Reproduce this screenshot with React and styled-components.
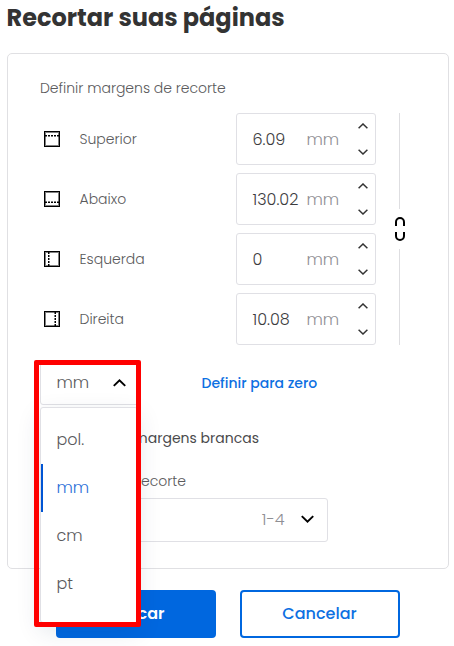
import { useState } from "react";
import styled, { createGlobalStyle } from "styled-components";

const margins = [
  { side: "top", label: "Superior", value: "6.09" },
  { side: "bottom", label: "Abaixo", value: "130.02" },
  { side: "left", label: "Esquerda", value: "0" },
  { side: "right", label: "Direita", value: "10.08" },
];

const units = ["pol.", "mm", "cm", "pt"];

const dashes = {
  top: "M1 4.75H15",
  bottom: "M1 11.25H15",
  left: "M4.75 1V15",
  right: "M11.25 1V15",
};

function SideIcon({ side }) {
  return (
    <svg width="16" height="16" viewBox="0 0 16 16" fill="none">
      <rect x="1.5" y="1.5" width="13" height="13" stroke="#808080" />
      <rect x="0.5" y="0.5" width="15" height="15" stroke="#000000" />
      <path d={dashes[side]} stroke="#000000" strokeWidth="1.5" strokeDasharray="2 1" />
    </svg>
  );
}

function Chevron({ up, width = 10, height = 6, color = "#333333", weight = 1.5 }) {
  return (
    <svg width={width} height={height} viewBox="0 0 10 6" fill="none">
      <path
        d={up ? "M0.6 5.2L5 1L9.4 5.2" : "M0.6 0.8L5 5L9.4 0.8"}
        stroke={color}
        strokeWidth={weight}
      />
    </svg>
  );
}

function LinkIcon() {
  return (
    <svg width="12" height="24" viewBox="0 0 12 24" fill="none" stroke="#000000" strokeWidth="2">
      <path d="M2 9V5A4 4 0 0 1 10 5V9" />
      <path d="M2 15V19A4 4 0 0 0 10 19V15" />
    </svg>
  );
}

export default function App() {
  const [unit, setUnit] = useState("mm");

  return (
    <Page>
      <GlobalStyle />
      <Title>Recortar suas páginas</Title>
      <Card>
        <Caption>Definir margens de recorte</Caption>
        <MarginArea>
          <Fields>
            {margins.map((item) => (
              <Field key={item.side}>
                <SideIcon side={item.side} />
                <FieldLabel>{item.label}</FieldLabel>
                <NumberBox>
                  <NumberValue>{item.value}</NumberValue>
                  <Suffix>{unit}</Suffix>
                  <Steppers>
                    <Chevron up />
                    <Chevron />
                  </Steppers>
                </NumberBox>
              </Field>
            ))}
          </Fields>
          <Linker>
            <Line />
            <LinkIcon />
            <Line />
          </Linker>
        </MarginArea>
        <UnitRow>
          <UnitSelect>
            <UnitName>{unit}</UnitName>
            <Chevron up width={13} height={8} color="#000000" weight={1.5} />
            <Menu>
              {units.map((name) => (
                <Option key={name} $active={name === unit} onClick={() => setUnit(name)}>
                  {name}
                </Option>
              ))}
            </Menu>
            <Highlight />
          </UnitSelect>
          <ResetButton>Definir para zero</ResetButton>
        </UnitRow>
        <CheckLabel>margens brancas</CheckLabel>
        <RangeLabel>recorte</RangeLabel>
        <RangeSelect>
          <Range>1-4</Range>
          <Chevron width={13} height={8} color="#000000" weight={1.5} />
        </RangeSelect>
      </Card>
      <Actions>
        <Button $primary>Aplicar</Button>
        <Button>Cancelar</Button>
      </Actions>
    </Page>
  );
}

const GlobalStyle = createGlobalStyle`
  body {
    margin: 0;
    background: #ffffff;
    font-family: Poppins, Inter, "Open Sans", sans-serif;
    font-weight: 300;
    color: #5a5a5c;
  }

  * {
    box-sizing: border-box;
  }

  button {
    font-family: inherit;
    padding: 0;
    cursor: pointer;
  }
`;

const Page = styled.div`
  width: 454px;
  height: 646px;
  overflow: hidden;
`;

const Title = styled.h1`
  height: 53px;
  margin: 0;
  padding-left: 6.5px;
  font-size: 24px;
  font-weight: 700;
  line-height: 36px;
  white-space: nowrap;
  color: #333333;
`;

const Card = styled.section`
  width: 442px;
  height: 516px;
  margin-left: 7px;
  padding: 24px 32px 0;
  border: 1px solid #e0e0e3;
  border-radius: 5px;
`;

const Caption = styled.p`
  height: 35px;
  margin: 0;
  font-size: 14px;
  line-height: 21px;
  letter-spacing: -0.02px;
`;

const MarginArea = styled.div`
  display: flex;
  height: 232px;
`;

const Fields = styled.div`
  display: flex;
  flex-direction: column;
  gap: 8px;
  width: 336px;
`;

const Field = styled.div`
  display: flex;
  align-items: center;
  height: 52px;
  padding-left: 4px;
`;

const FieldLabel = styled.span`
  flex: 1;
  padding-left: 19.5px;
  font-size: 14px;
`;

const NumberBox = styled.div`
  display: flex;
  align-items: center;
  width: 140px;
  height: 52px;
  padding: 0 7px 0 15.5px;
  border: 1px solid #e0e0e5;
  border-radius: 3px;
  font-size: 16px;
`;

const NumberValue = styled.span`
  width: 54px;
  color: #3c3c3e;
`;

const Suffix = styled.span`
  flex: 1;
  color: #8f8f94;
`;

const Steppers = styled.span`
  display: flex;
  flex-direction: column;
  gap: 20px;
  padding-bottom: 1px;
`;

const Linker = styled.div`
  display: flex;
  flex-direction: column;
  align-items: center;
  justify-content: space-between;
  width: 12px;
  margin-left: 18px;
`;

const Line = styled.span`
  width: 1px;
  height: 96px;
  margin-right: 1px;
  background: #dedee1;
`;

const UnitRow = styled.div`
  display: flex;
  height: 60px;
  margin-top: 15px;
`;

const UnitSelect = styled.div`
  position: relative;
  display: flex;
  align-items: center;
  justify-content: space-between;
  width: 100px;
  height: 45px;
  padding: 0 13.5px 0 15.5px;
  border: 1px solid #e0e0e5;
  border-radius: 3px;
`;

const UnitName = styled.span`
  font-size: 16px;
`;

const Menu = styled.div`
  position: absolute;
  z-index: 1;
  top: 46px;
  left: -1px;
  width: 98px;
  height: 216px;
  padding-top: 8px;
  border: 1px solid #e0e0e5;
  border-radius: 3px;
  background: #ffffff;
  box-shadow: 0 8px 24px rgba(20, 50, 80, 0.12);
`;

const Option = styled.div`
  height: 48px;
  padding-left: 13.5px;
  border-left: 2px solid ${(props) => (props.$active ? "#0055d4" : "transparent")};
  font-size: 16px;
  line-height: 48px;
  color: ${(props) => (props.$active ? "#2c6fd8" : "#5a5a5c")};
  cursor: pointer;
`;

const Highlight = styled.div`
  position: absolute;
  z-index: 2;
  top: -1px;
  left: -7px;
  width: 107px;
  height: 267px;
  border: 5px solid #ff0000;
  border-radius: 2px;
  pointer-events: none;
`;

const ResetButton = styled.button`
  width: 116px;
  height: 46px;
  margin-left: 61.5px;
  border: 0;
  background: none;
  font-size: 14px;
  font-weight: 500;
  text-align: left;
  white-space: nowrap;
  color: #0d70e2;
`;

const CheckLabel = styled.div`
  width: 219px;
  height: 38px;
  padding-top: 8px;
  font-size: 14px;
  font-weight: 400;
  line-height: 21px;
  text-align: right;
  color: #4a4a4c;
`;

const RangeLabel = styled.div`
  width: 146px;
  height: 40px;
  padding-top: 13px;
  font-size: 14px;
  line-height: 21px;
  text-align: right;
`;

const RangeSelect = styled.div`
  display: flex;
  align-items: center;
  justify-content: flex-end;
  gap: 16px;
  width: 288px;
  height: 44px;
  padding: 0 13.5px 2px 0;
  border: 1px solid #e0e0e5;
  border-radius: 3px;
`;

const Range = styled.span`
  font-size: 16px;
  color: #8f8f94;
`;

const Actions = styled.div`
  display: flex;
  gap: 24px;
  margin-top: 21px;
  padding-left: 56px;
`;

const Button = styled.button`
  width: 160px;
  height: 48px;
  padding: 0 1px 2px 0;
  border: 2px solid #0067df;
  border-radius: 4px;
  background: ${(props) => (props.$primary ? "#0067df" : "#ffffff")};
  font-size: 16px;
  font-weight: ${(props) => (props.$primary ? 600 : 500)};
  color: ${(props) => (props.$primary ? "#ffffff" : "#0d70e2")};
`;
